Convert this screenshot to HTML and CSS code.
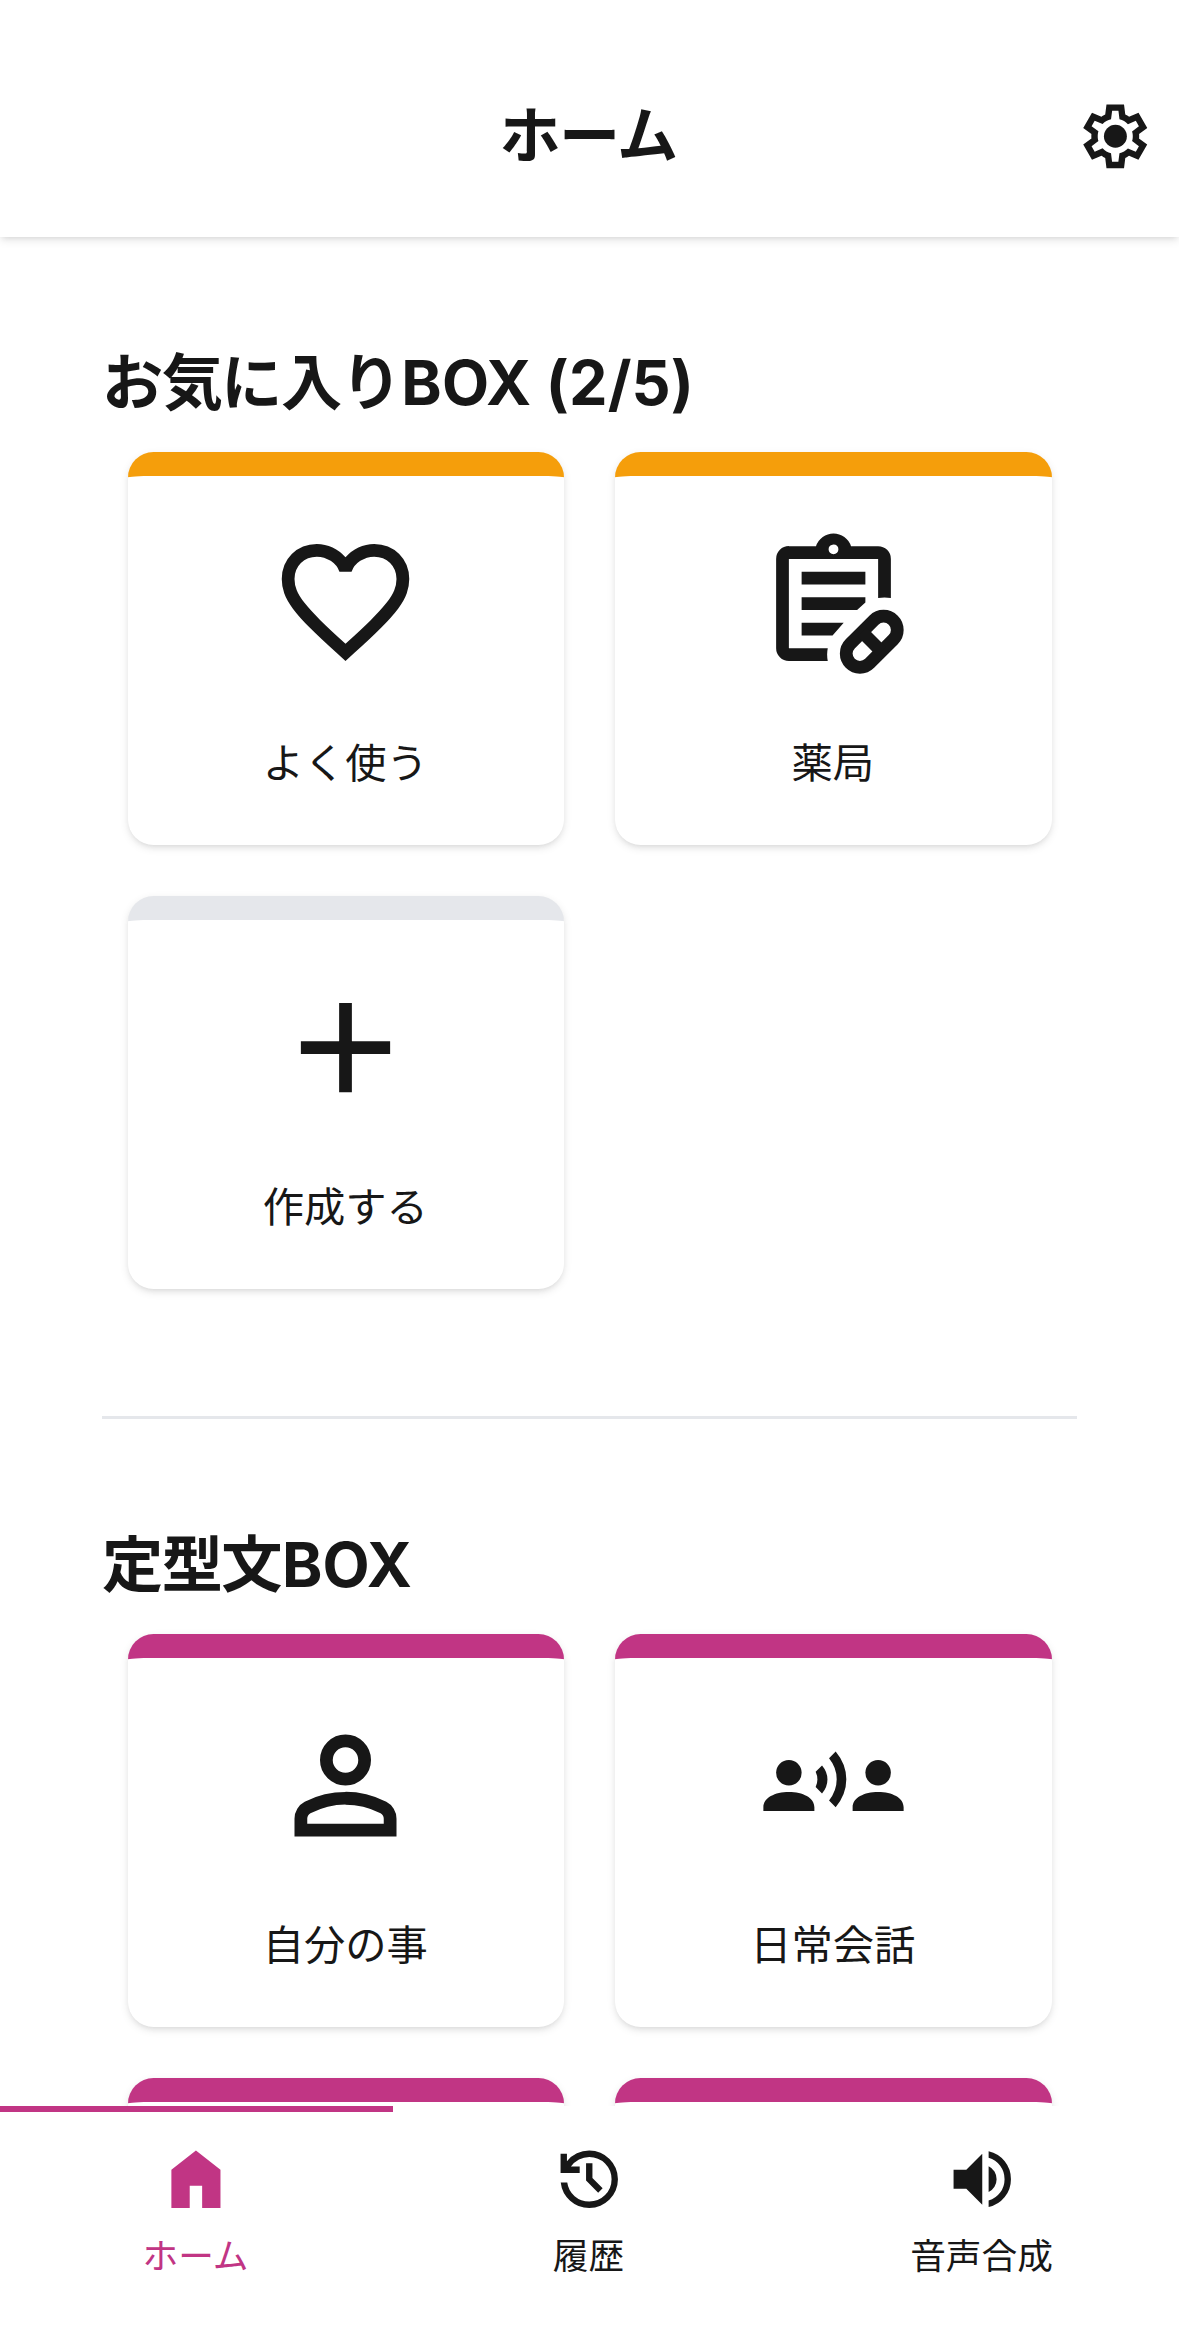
FILE: index.html
```html
<!DOCTYPE html>
<html lang="ja">
<head>
    <meta charset="UTF-8">
    <meta name="viewport" content="width=device-width, initial-scale=1.0">
    <title>ホーム</title>
    <link rel="stylesheet" href="styles.css">
</head>
<body>

    <!-- Header -->
    <header class="header">
        <h1 class="title">ホーム</h1>
        <button class="settings" aria-label="設定">
            <svg class="icon" viewBox="0 0 24 24"><path d="m9.25 22l-.4-3.2q-.325-.125-.612-.3t-.563-.375L4.7 19.375l-2.75-4.75l2.575-1.95Q4.5 12.5 4.5 12.338v-.675q0-.163.025-.338L1.95 9.375l2.75-4.75l2.975 1.25q.275-.2.575-.375t.6-.3l.4-3.2h5.5l.4 3.2q.325.125.613.3t.562.375l2.975-1.25l2.75 4.75l-2.575 1.95q.025.175.025.338v.674q0 .163-.05.338l2.575 1.95l-2.75 4.75l-2.95-1.25q-.275.2-.575.375t-.6.3l-.4 3.2h-5.5ZM11 20h1.975l.35-2.65q.775-.2 1.438-.588t1.212-.937l2.475 1.025l.975-1.7l-2.15-1.625q.125-.35.175-.737T17.5 12q0-.4-.05-.787t-.175-.738l2.15-1.625l-.975-1.7l-2.475 1.05q-.55-.575-1.212-.962t-1.438-.588L13 4h-1.975l-.35 2.65q-.775.2-1.437.588t-1.213.937L5.55 7.15l-.975 1.7l2.15 1.6q-.125.375-.175.75t-.05.8q0 .4.05.775t.175.75l-2.15 1.625l.975 1.7l2.475-1.05q.55.575 1.213.963t1.437.587L11 20Z"/><circle cx="12.05" cy="12" r="3.6"/></svg>
        </button>
    </header>

    <main class="main">
        <!-- Favorite boxes -->
        <section class="section">
            <h2 class="heading">お気に入り<span class="latin">BOX (2/5)</span></h2>
            <div class="grid">
                <a class="card favorite">
                    <svg class="icon" viewBox="0 0 24 24"><path d="m12 21l-1.45-1.3q-2.525-2.275-4.175-3.925T3.75 12.812T2.388 10.4T2 8.15Q2 5.8 3.575 4.225T7.5 2.65q1.3 0 2.475.55T12 4.75q.85-1 2.025-1.55t2.475-.55q2.35 0 3.925 1.575T22 8.15q0 1.125-.388 2.25t-1.362 2.412t-2.625 2.963T13.45 19.7L12 21Zm0-2.7q2.4-2.15 3.95-3.687t2.45-2.675t1.25-2.026T20 8.15q0-1.5-1-2.5t-2.5-1q-1.175 0-2.175.662T12.95 7h-1.9q-.375-1.025-1.375-1.687T7.5 4.65q-1.5 0-2.5 1t-1 2.5q0 .875.35 1.763t1.25 2.025t2.45 2.675T12 18.3Z"/></svg>
                    <span class="label">よく使う</span>
                </a>
                <a class="card favorite">
                    <svg class="icon" viewBox="0 0 24 24">
                        <path d="M5 21q-.825 0-1.413-.587T3 19V5q0-.825.588-1.413T5 3h4.25q.3-.9 1.06-1.45T12 1t1.7.55T14.75 3H19q.825 0 1.413.588T21 5v6.15q-.5-.1-1-.1t-1 .1V5H5v14h6.1q-.1.5-.1 1t.1 1H5ZM12 4.28q.33 0 .55-.23t.22-.55t-.22-.55T12 2.73t-.55.22t-.22.55t.22.55t.55.23Z"/>
                        <path d="M7 7h10v2H7ZM7 11h10v.85L15.7 13H7ZM7 15h6.6L11.85 17H7Z"/>
                        <g class="stroke" transform="rotate(-45 18 18)">
                            <rect x="13.23" y="15.85" width="9.54" height="4.3" rx="2.15"/>
                            <path d="M18 15.85v4.3"/>
                        </g>
                    </svg>
                    <span class="label">薬局</span>
                </a>
                <a class="card create">
                    <svg class="icon" viewBox="0 0 24 24"><path d="M11 19v-6H5v-2h6V5h2v6h6v2h-6v6h-2Z"/></svg>
                    <span class="label">作成する</span>
                </a>
            </div>
        </section>

        <!-- Phrase boxes -->
        <section class="section">
            <h2 class="heading">定型文<span class="latin">BOX</span></h2>
            <div class="grid">
                <a class="card phrase">
                    <svg class="icon" viewBox="0 0 24 24"><path d="M12 12q-1.65 0-2.825-1.175T8 8t1.175-2.825T12 4t2.825 1.175T16 8t-1.175 2.825T12 12Zm-8 8v-2.8q0-.85.438-1.562T5.6 14.55q1.55-.775 3.15-1.162T12 13t3.25.388t3.15 1.162q.725.375 1.163 1.088T20 17.2V20H4Zm2-2h12v-.8q0-.275-.137-.5t-.363-.35q-1.35-.675-2.725-1.012T12 15t-2.775.338T6.5 16.35q-.225.125-.363.35T6 17.2v.8Zm6-8q.825 0 1.413-.588T14 8t-.587-1.412T12 6t-1.412.588T10 8t.588 1.413T12 10Z"/></svg>
                    <span class="label">自分の事</span>
                </a>
                <a class="card phrase">
                    <svg class="icon" viewBox="0 0 24 24">
                        <circle cx="5" cy="10" r="2"/>
                        <circle cx="19" cy="10" r="2"/>
                        <path d="M1 16v-.6C1 13.9 2.8 13 5 13s4 .9 4 2.4v.6ZM15 16v-.6c0-1.5 1.8-2.4 4-2.4s4 .9 4 2.4v.6Z"/>
                        <path d="M10.2 8.85q.85 1 .85 2.2t-.85 2.2l-1-1q.55-1.2 0-2.4ZM12.34 6.67q1.67 2 1.67 4.36t-1.67 4.39L11.3 14.35q1.2-1.5 1.2-3.32t-1.2-3.3Z"/>
                    </svg>
                    <span class="label">日常会話</span>
                </a>
                <a class="card phrase"></a>
                <a class="card phrase"></a>
            </div>
        </section>
    </main>

    <!-- Bottom navigation -->
    <nav class="nav">
        <a class="nav-item active">
            <svg class="icon" viewBox="0 0 24 24"><path d="M4.2 21V9L11.9 3l7.7 6v12h-5.75v-7H9.95v7H4.2Z"/></svg>
            <span>ホーム</span>
        </a>
        <a class="nav-item">
            <svg class="icon" viewBox="0 0 24 24"><path d="M12 21q-3.45 0-6.012-2.287T3.05 13H5.1q.35 2.6 2.313 4.3T12 19q2.925 0 4.963-2.037T19 12t-2.037-4.962T12 5q-1.725 0-3.225.8T6.25 8H9v2H3V4h2v2.35q1.275-1.6 3.113-2.475T12 3q1.875 0 3.513.713t2.85 1.924t1.925 2.85T21 12t-.712 3.513t-1.925 2.85t-2.85 1.925T12 21Zm2.8-4.8L11 12.4V7h2v4.6l3.2 3.2l-1.4 1.4Z"/></svg>
            <span>履歴</span>
        </a>
        <a class="nav-item">
            <svg class="icon" viewBox="0 0 24 24"><path d="M14 20.725v-2.05q2.25-.65 3.625-2.5t1.375-4.2q0-2.35-1.375-4.2T14 5.275v-2.05q3.1.7 5.05 3.138T21 11.975q0 3.175-1.95 5.613T14 20.725ZM3 15V9h4l5-5v16l-5-5H3Zm11 1V7.95q1.175.55 1.838 1.65T16.5 12q0 1.275-.663 2.363T14 16Z"/></svg>
            <span>音声合成</span>
        </a>
    </nav>

</body>
</html>
```

FILE: styles.css
```css
html {
    font-size: 51px;
}
* {
    box-sizing: border-box;
}
body {
    font-family: Inter, "Noto Sans CJK JP", sans-serif;
    display: flex;
    flex-direction: column;
    height: 100vh;
    margin: 0;
    overflow: hidden;
    background: white;
    color: #171717;
}
h1, h2 {
    margin: 0;
    font-size: 1.2rem;
    font-weight: 700;
    letter-spacing: -0.025em;
}
.latin {
    margin-left: 1px;
    letter-spacing: 0.002em;
}
.icon {
    display: block;
    width: 1.5rem;
    height: 1.5rem;
    fill: currentColor;
    flex-shrink: 0;
}
.stroke {
    fill: none;
    stroke: currentColor;
    stroke-width: 2;
}
.header {
    display: grid;
    grid-template-columns: 1fr auto 1fr;
    align-items: center;
    height: 237px;
    flex-shrink: 0;
    padding: 35px 0.5rem 0;
    background: white;
    box-shadow: 0 3px 9px rgba(0, 0, 0, 0.1), 0 3px 6px -3px rgba(0, 0, 0, 0.1);
    z-index: 1;
}
.title {
    grid-column: 2;
    padding: 0 3px 9px 0;
}
.settings {
    justify-self: end;
    padding: 0;
    border: none;
    background: none;
    color: inherit;
}
.main {
    flex: 1;
    min-height: 0;
    overflow: hidden;
    padding: 0 2rem;
}
.section {
    padding: 2rem 0;
}
.section + .section {
    border-top: 3px solid #e5e7eb;
}
.heading {
    height: 87.5px;
    line-height: 88px;
}
.grid {
    display: grid;
    grid-template-columns: 1fr 1fr;
    gap: 1rem;
    padding: 0.5rem;
}
.card {
    display: flex;
    flex-direction: column;
    align-items: center;
    gap: 53px;
    height: 392.8px;
    padding-top: 1rem;
    border-top: 24px solid #e5e7eb;
    border-radius: 0.5rem;
    background: white;
    box-shadow: 0 3px 9px rgba(0, 0, 0, 0.1), 0 3px 6px -3px rgba(0, 0, 0, 0.1);
}
.card .icon {
    width: 3rem;
    height: 3rem;
}
.favorite {
    border-color: #f59e0b;
}
.phrase {
    border-color: #c13584;
}
.label {
    padding-right: 1px;
    font-size: 41.3px;
    line-height: 61px;
}
.nav {
    display: flex;
    height: 220px;
    flex-shrink: 0;
    background: white;
}
.nav-item {
    flex: 1;
    display: flex;
    flex-direction: column;
    align-items: center;
    gap: 13px;
    padding-top: 29px;
    border-top: 6px solid transparent;
    font-size: 0.7rem;
    line-height: 51px;
}
.nav-item span {
    padding-right: 2px;
}
.active {
    border-color: #c13584;
    color: #c13584;
}
```
